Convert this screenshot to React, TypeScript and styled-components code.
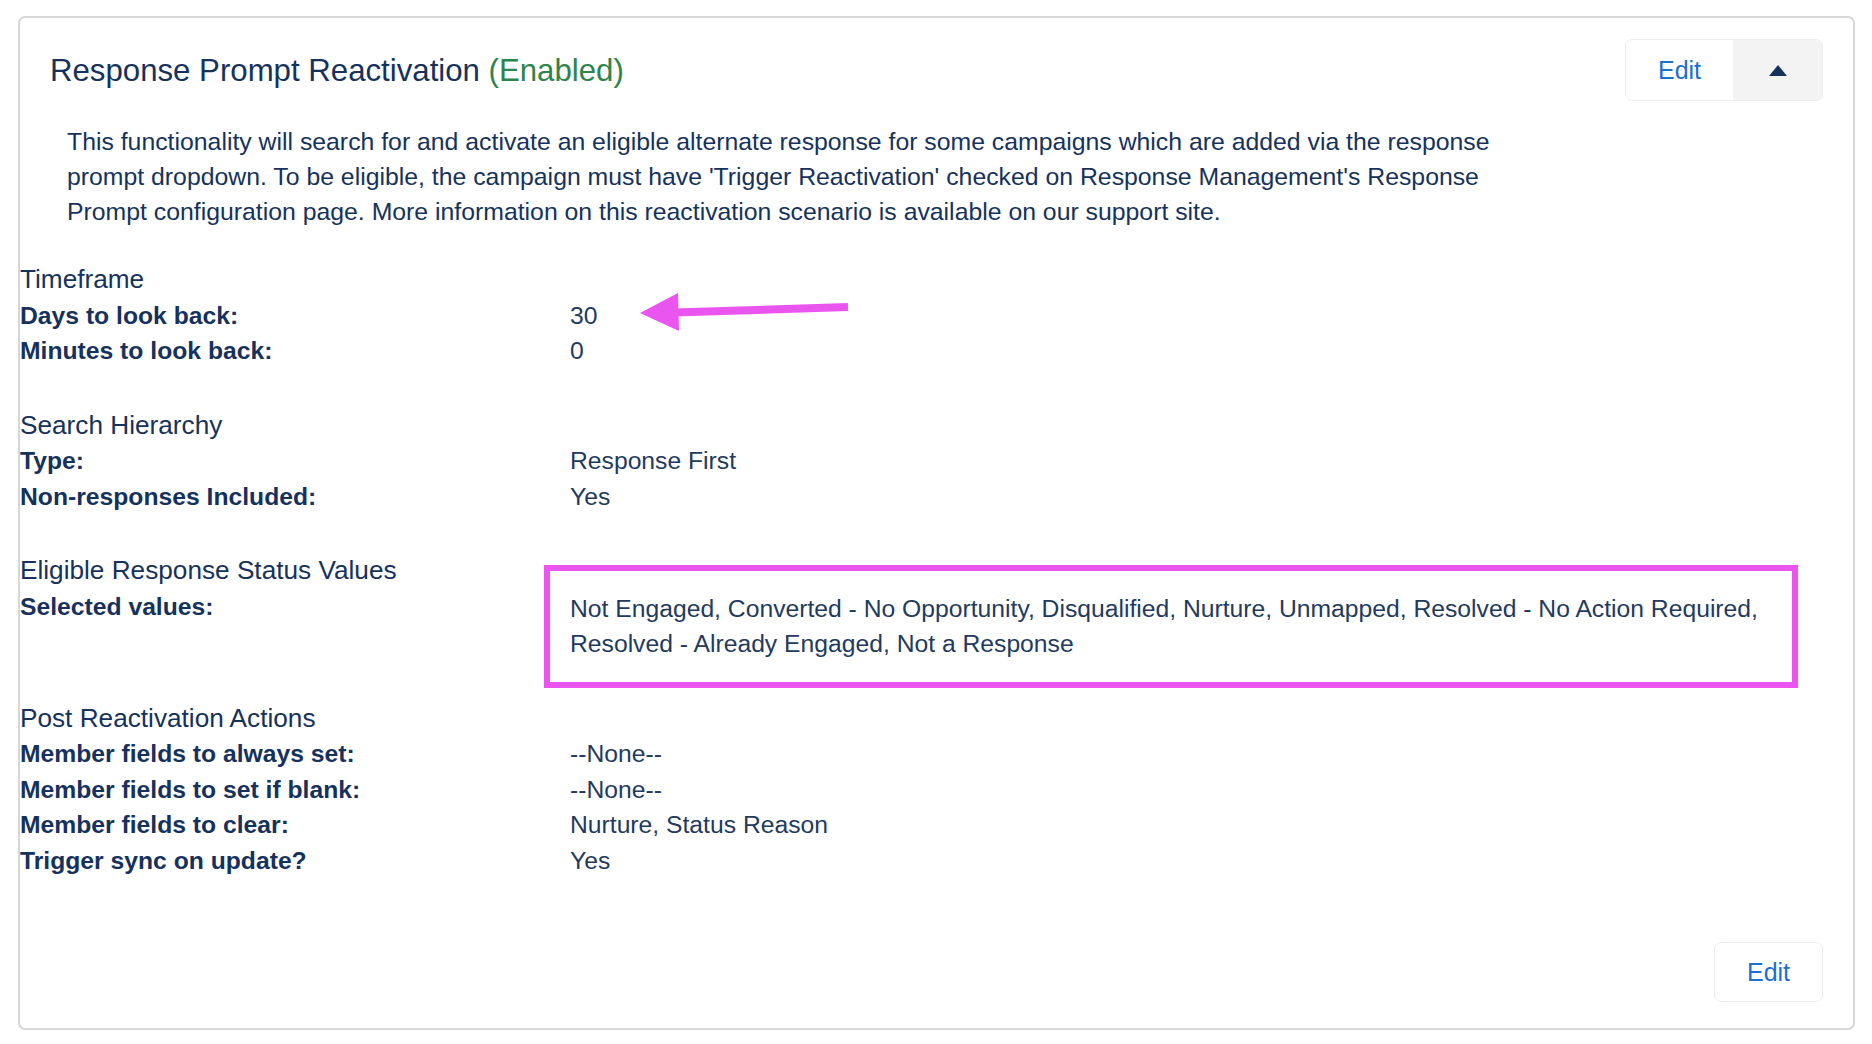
import React from 'react';
import styled, { createGlobalStyle } from 'styled-components';

const GlobalStyle = createGlobalStyle`
  html, body {
    margin: 0;
    padding: 0;
    background: #ffffff;
  }
  body {
    font-family: "Liberation Sans", Arial, sans-serif;
    color: #16325c;
  }
`;

const Page = styled.div`
  padding: 15.5px 17px 15px 18px;
`;

const Card = styled.section`
  border: 2px solid #d6d6d6;
  border-radius: 7px;
  padding: 22.5px 30px 25.5px 0;
`;

const Header = styled.div`
  display: flex;
  align-items: center;
  justify-content: space-between;
  height: 60px;
  padding-left: 30px;
`;

const Title = styled.h2`
  margin: 2px 0 0;
  font-size: 31.2px;
  font-weight: 400;
  color: #16325c;
`;

const Status = styled.span`
  color: #2e844a;
`;

const ButtonGroup = styled.div`
  display: flex;
  height: 60px;
  border: 1px solid #ececec;
  border-radius: 7px;
  overflow: hidden;
`;

const EditButton = styled.button<{ $width?: number }>`
  width: ${(p) => p.$width ?? 107}px;
  height: 60px;
  border: 0;
  background: #ffffff;
  color: #1b6fd1;
  font-family: inherit;
  font-size: 25px;
  cursor: pointer;
`;

const ToggleButton = styled.button`
  width: 89px;
  height: 60px;
  border: 0;
  background: #f3f3f3;
  display: flex;
  align-items: center;
  justify-content: center;
  cursor: pointer;
`;

const Description = styled.p`
  margin: 23.5px 0 0;
  padding-left: 47px;
  max-width: 1450px;
  font-size: 24.8px;
  line-height: 35px;
  color: #16325c;
`;

const Sections = styled.div`
  margin-top: 33.5px;
`;

const Section = styled.div`
  display: grid;
  grid-template-columns: 550px 1fr;
  line-height: 35.5px;
  & + & {
    margin-top: 39px;
  }
`;

const SectionTitle = styled.div`
  grid-column: 1 / -1;
  font-size: 26.2px;
  color: #16325c;
`;

const Label = styled.div`
  font-size: 24.7px;
  font-weight: 700;
  color: #16325c;
`;

const Value = styled.div`
  position: relative;
  font-size: 24.7px;
  color: #233a5e;
`;

const Highlight = styled.div`
  box-sizing: border-box;
  width: 1254px;
  margin: -24px 0 -26px -26px;
  padding: 20px;
  border: 6px solid #ea55ef;
`;

const Arrow = styled.svg`
  position: absolute;
  left: 66px;
  top: -7.5px;
  pointer-events: none;
`;

const Footer = styled.div`
  display: flex;
  justify-content: flex-end;
  margin-top: 64px;
`;

const FooterEdit = styled(EditButton)`
  height: 60px;
  border: 1px solid #ececec;
  border-radius: 7px;
`;

type Row = { label: string; value: string; arrow?: boolean; boxed?: boolean };
type Group = { title: string; rows: Row[] };

const groups: Group[] = [
  {
    title: 'Timeframe',
    rows: [
      { label: 'Days to look back:', value: '30', arrow: true },
      { label: 'Minutes to look back:', value: '0' },
    ],
  },
  {
    title: 'Search Hierarchy',
    rows: [
      { label: 'Type:', value: 'Response First' },
      { label: 'Non-responses Included:', value: 'Yes' },
    ],
  },
  {
    title: 'Eligible Response Status Values',
    rows: [
      {
        label: 'Selected values:',
        value:
          'Not Engaged, Converted - No Opportunity, Disqualified, Nurture, Unmapped, Resolved - No Action Required, Resolved - Already Engaged, Not a Response',
        boxed: true,
      },
    ],
  },
  {
    title: 'Post Reactivation Actions',
    rows: [
      { label: 'Member fields to always set:', value: '--None--' },
      { label: 'Member fields to set if blank:', value: '--None--' },
      { label: 'Member fields to clear:', value: 'Nurture, Status Reason' },
      { label: 'Trigger sync on update?', value: 'Yes' },
    ],
  },
];

const PointerArrow = () => (
  <Arrow width="216" height="46" viewBox="0 0 216 46">
    <line x1="38" y1="22.5" x2="212" y2="17" stroke="#ea55ef" strokeWidth="8" />
    <polygon points="4,23 42,3 43,41" fill="#ea55ef" />
  </Arrow>
);

const App: React.FC = () => {
  return (
    <Page>
      <GlobalStyle />
      <Card>
        <Header>
          <Title>
            Response Prompt Reactivation <Status>(Enabled)</Status>
          </Title>
          <ButtonGroup>
            <EditButton>Edit</EditButton>
            <ToggleButton aria-label="Collapse">
              <svg width="18" height="11" viewBox="0 0 18 11">
                <polygon points="9,0 18,11 0,11" fill="#16325c" />
              </svg>
            </ToggleButton>
          </ButtonGroup>
        </Header>

        <Description>
          This functionality will search for and activate an eligible alternate response for some
          campaigns which are added via the response prompt dropdown. To be eligible, the campaign
          must have 'Trigger Reactivation' checked on Response Management's Response Prompt
          configuration page. More information on this reactivation scenario is available on our
          support site.
        </Description>

        <Sections>
          {groups.map((g) => (
            <Section key={g.title}>
              <SectionTitle>{g.title}</SectionTitle>
              {g.rows.map((r) => (
                <React.Fragment key={r.label}>
                  <Label>{r.label}</Label>
                  <Value>
                    {r.boxed ? <Highlight>{r.value}</Highlight> : r.value}
                    {r.arrow && <PointerArrow />}
                  </Value>
                </React.Fragment>
              ))}
            </Section>
          ))}
        </Sections>

        <Footer>
          <FooterEdit $width={109}>Edit</FooterEdit>
        </Footer>
      </Card>
    </Page>
  );
};

export default App;
